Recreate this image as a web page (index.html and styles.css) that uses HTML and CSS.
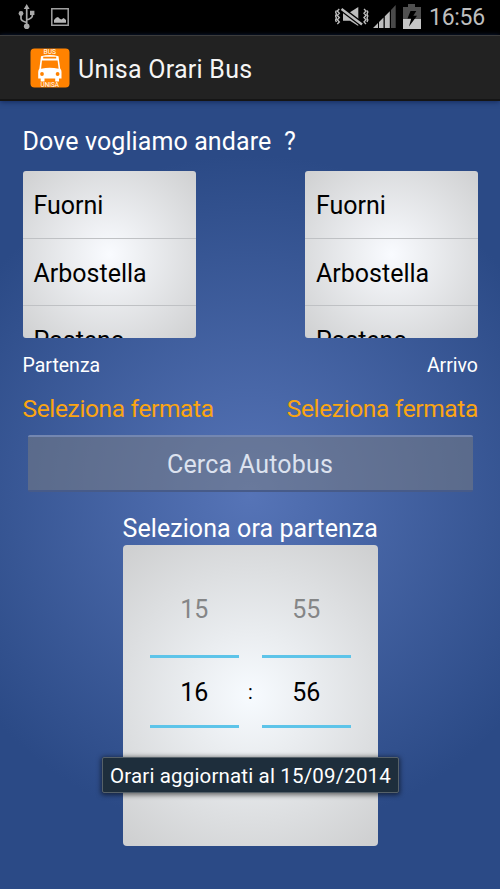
FILE: index.html
```html
<!DOCTYPE html>
<html lang="it">
<head>
<meta charset="utf-8">
<title>Unisa Orari Bus</title>
<link rel="stylesheet" href="styles.css">
</head>
<body>
<div class="statusbar">
  <svg class="usb" width="18" height="26" viewBox="0 0 18 26" fill="none" stroke="#a9a9a9" stroke-width="1.7">
    <path d="M8.7 4V22M8.7 18.5Q3 16.8 3 14.5V10M8.7 16Q14.3 14.2 14.3 12V9"/>
    <path d="M8.7 0L11.6 5H5.8zM12 6.7h4.4v4.4H12z" fill="#a9a9a9" stroke="none"/>
    <circle cx="3" cy="9.5" r="2.4" fill="#a9a9a9" stroke="none"/>
    <circle cx="8.7" cy="22.2" r="2.8" fill="#a9a9a9" stroke="none"/>
  </svg>
  <svg class="picture" width="18" height="18" viewBox="0 0 18 18">
    <path d="M.8.8h16.4v16.4H.8z" fill="none" stroke="#a0a0a0" stroke-width="1.5"/>
    <path d="M3 14.8V12l2-2.2L7 9l1.8 1.7 1.5.8L12.7 10l2.3 2v2.8z" fill="#b8b8b8"/>
  </svg>
  <span class="spacer"></span>
  <svg class="mute" width="34" height="22" viewBox="0 0 34 22" fill="none" stroke="#bdbdbd" stroke-width="1.4">
    <path d="M4.3 3l-2 2 2 2.2-2 2.2 2 2.2-2 2.2 2 2.2-2 2M1.4 4.5L.6 6l.8 2-.8 2 .8 2-.8 2 .8 2M29 3l2 2-2 2.2 2 2.2-2 2.2 2 2.2-2 2.2 2 2M32 4.5l.8 1.5-.8 2 .8 2-.8 2 .8 2-.8 2"/>
    <path d="M8 6.2v8.6h7l8.3 5.2V1L15 6.2z" fill="#bdbdbd" stroke="none"/>
    <path d="M6 2.5l21 16" stroke="#000" stroke-width="5"/>
    <path d="M6.5 3L27 18.5" stroke="#bdbdbd" stroke-width="2.4"/>
  </svg>
  <svg class="signal" width="23" height="23" viewBox="0 0 23 23">
    <path d="M0 23l5-5v5zM6 17l4.5-4.5V23H6zM11.8 11.3l5-5V23h-5z" fill="#bdbdbd"/>
    <path d="M18 5l4.7-5v23H18z" fill="#494949"/>
  </svg>
  <svg class="battery" width="18" height="25" viewBox="0 0 18 25">
    <path d="M0 3h5V0h7v3h6v12H0z" fill="#505050"/>
    <path d="M0 15h18v10H0z" fill="#c6c6c6"/>
    <path d="M7.5 7h5.8l-3 4.7H14L6 22.5l2.2-8H4.5z" fill="#000"/>
  </svg>
  <span class="clock">16:56</span>
</div>
<header class="actionbar">
  <svg class="logo" width="40" height="40" viewBox="0 0 40 40">
    <rect x=".5" y=".5" width="39" height="39" rx="4" fill="#ff8200"/>
    <text x="13.5" y="6.4" textLength="12.5" lengthAdjust="spacingAndGlyphs">BUS</text>
    <text x="10.5" y="39.2" textLength="18.5" lengthAdjust="spacingAndGlyphs">UNISA</text>
    <path d="M11 8.2Q19.5 6 28.5 8.2L30.2 20.5Q31.7 22 31.5 24V30.5H29v3H25.2v-3H14.5v3H10.7v-3H8.2V24q0-2 1.2-3.5z" fill="#fff"/>
    <path d="M13.2 8.8h13v1.7h-13zM12 12.5h15.6l1 8.2q-9-1.8-17.5 0z" fill="#ff8200"/>
    <circle cx="12" cy="26" r="1.9" fill="#ff8200"/><circle cx="27.6" cy="26" r="1.9" fill="#ff8200"/>
  </svg>
  <h1>Unisa Orari Bus</h1>
</header>
<main>
  <h2>Dove vogliamo andare &nbsp;?</h2>
  <div class="stops">
    <section>
      <ul class="list"><li>Fuorni</li><li>Arbostella</li><li>Pastena</li></ul>
      <p class="caption">Partenza</p>
      <p class="choice">Seleziona fermata</p>
    </section>
    <section class="arrival">
      <ul class="list"><li>Fuorni</li><li>Arbostella</li><li>Pastena</li></ul>
      <p class="caption">Arrivo</p>
      <p class="choice">Seleziona fermata</p>
    </section>
  </div>
  <button class="search" disabled>Cerca Autobus</button>
  <p class="time-title">Seleziona ora partenza</p>
  <div class="picker">
    <div class="wheel"><span class="previous">15</span><span class="current">16</span></div>
    <span class="colon">:</span>
    <div class="wheel"><span class="previous">55</span><span class="current">56</span></div>
  </div>
</main>
<div class="toast">Orari aggiornati al 15/09/2014</div>
</body>
</html>
```
FILE: styles.css
```css
* { box-sizing: border-box; }
body {
  position: relative;
  margin: 0;
  width: 500px;
  height: 889px;
  overflow: hidden;
  font: 25px/30px Roboto, sans-serif;
  color: #fff;
  background: radial-gradient(circle at 250px 495px, #5674b7, #2b4a86 340px);
}
h1, h2, p, ul { margin: 0; padding: 0; font-size: inherit; font-weight: 400; white-space: nowrap; }
.statusbar { display: flex; height: 35px; background: #000; padding: 4px 15px 0 18px; align-items: flex-start; }
.picture { margin: 4px 0 0 15px; }
.spacer { flex: 1; }
.mute { margin: 2px 4px 0 0; }
.signal { margin: 1px 7px 0 0; }
.battery { margin: 0 8px 0 0; }
.clock { width: 56px; font-size: 23px; letter-spacing: -.3px; line-height: 27px; color: #bebebe; }
.actionbar {
  display: flex;
  align-items: center;
  height: 66px;
  padding: 1px 0 0 30px;
  background: #222;
  border-top: 1px solid #3c3c3c;
  border-bottom: 2px solid #151515;
  box-shadow: 0 1px 5px #142a5c;
}
.logo { margin-right: 8px; }
.logo text { font: 7.5px Roboto, sans-serif; fill: #fff; }
h1 { letter-spacing: .25px; color: #f5f5f5; padding-top: 3px; }
main { padding: 26px 22px 0 22.5px; }
h2 { height: 44px; letter-spacing: .1px; }
.stops { display: flex; justify-content: space-between; }
.stops section { width: 200px; }
.list {
  width: 173px;
  height: 167px;
  overflow: hidden;
  list-style: none;
  color: #000;
  border-radius: 3px;
  background: radial-gradient(circle at 50% 50%, #f9fbff, #cfd0d1 120px);
}
.list li { height: 67.5px; padding-left: 11px; line-height: 69px; border-bottom: 1px solid #bfc1c4; }
.arrival { text-align: right; }
.arrival .list { margin-left: auto; text-align: left; }
.caption { height: 55px; font-size: 19.5px; line-height: 56px; }
.choice { height: 42px; font-size: 24.5px; letter-spacing: -.35px; line-height: 32px; color: #fba511; }
.search {
  display: block;
  width: 445px;
  height: 57px;
  margin-left: 5px;
  padding: 3px 0 0;
  font: inherit;
  letter-spacing: .2px;
  color: #dce2ef;
  background: rgba(128, 128, 128, .48);
  border: 0;
  border-top: 2px solid #7487b1;
  border-bottom: 2px solid #475b89;
  border-radius: 2px;
}
.time-title { margin: 22px 0 1px; text-align: center; letter-spacing: .08px; }
.picker {
  display: flex;
  width: 255px;
  height: 301px;
  margin: 0 auto;
  padding: 0 27px;
  justify-content: space-between;
  color: #000;
  border-radius: 4px;
  background: radial-gradient(circle at 50% 50%, #f7fbff, #cfd0d1 190px);
}
.wheel { width: 89px; text-align: center; }
.wheel span { display: block; }
.previous { height: 110px; line-height: 130px; color: #858687; }
.current { height: 73px; line-height: 69px; border: solid #5dc4e9; border-width: 3px 0; }
.colon { padding-top: 133px; font-size: 19.5px; }
.toast {
  position: absolute;
  left: 102px;
  top: 757px;
  width: 297px;
  height: 36px;
  font-size: 20.5px;
  letter-spacing: .16px;
  line-height: 36px;
  text-align: center;
  white-space: nowrap;
  background: #1e2e3c;
  border: 1px solid #566169;
  border-radius: 2px;
  box-shadow: 0 1px 5px 1px rgba(0, 0, 0, .55);
}
```
